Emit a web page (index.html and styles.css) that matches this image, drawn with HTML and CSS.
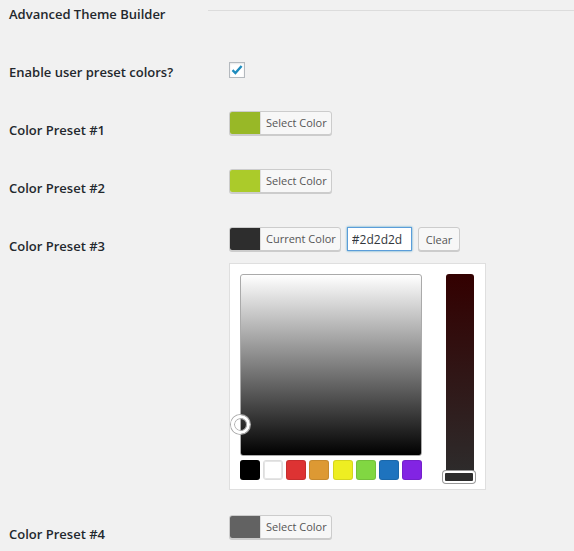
FILE: index.html
```
<!DOCTYPE html>
<html lang="en">
<head>
    <meta charset="UTF-8">
    <meta name="viewport" content="width=device-width, initial-scale=1.0">
    <title>Advanced Theme Builder</title>
    <link rel="stylesheet" href="styles.css">
</head>
<body>
    <div class="page">
        <div class="section-head">
            <h2>Advanced Theme Builder</h2>
            <div class="rule"></div>
        </div>

        <div class="row row-check">
            <label class="row-label">Enable user preset colors?</label>
            <div class="row-field">
                <span class="checkbox">
                    <svg width="14" height="14" viewBox="0 0 14 14"><path d="M2.5 7.2 L5.4 10 L11.6 3" fill="none" stroke="#1e8cbe" stroke-width="2.4"/></svg>
                </span>
            </div>
        </div>

        <div class="row">
            <label class="row-label">Color Preset #1</label>
            <div class="row-field">
                <button class="color-btn"><span class="swatch preset-1"></span><span class="btn-text">Select Color</span></button>
            </div>
        </div>

        <div class="row">
            <label class="row-label">Color Preset #2</label>
            <div class="row-field">
                <button class="color-btn"><span class="swatch preset-2"></span><span class="btn-text">Select Color</span></button>
            </div>
        </div>

        <div class="row row-open">
            <label class="row-label">Color Preset #3</label>
            <div class="row-field">
                <div class="controls">
                    <button class="color-btn"><span class="swatch preset-3"></span><span class="btn-text">Current Color</span></button>
                    <input type="text" class="hex-input" value="#2d2d2d">
                    <button class="plain-btn">Clear</button>
                </div>
                <div class="picker">
                    <div class="picker-main">
                        <div class="square">
                            <span class="handle"></span>
                        </div>
                        <div class="palette">
                            <span class="pal" style="background:#000"></span>
                            <span class="pal pal-white" style="background:#fff"></span>
                            <span class="pal" style="background:#dd3333"></span>
                            <span class="pal" style="background:#dd9933"></span>
                            <span class="pal" style="background:#eeee22"></span>
                            <span class="pal" style="background:#81d742"></span>
                            <span class="pal" style="background:#1e73be"></span>
                            <span class="pal" style="background:#8224e3"></span>
                        </div>
                    </div>
                    <div class="slider">
                        <span class="slider-handle"></span>
                    </div>
                </div>
            </div>
        </div>

        <div class="row">
            <label class="row-label">Color Preset #4</label>
            <div class="row-field">
                <button class="color-btn"><span class="swatch preset-4"></span><span class="btn-text">Select Color</span></button>
            </div>
        </div>
    </div>
</body>
</html>
```

FILE: styles.css
```
body {
    margin: 0;
    background: #f1f1f1;
    color: #23282d;
    font-family: "Open Sans", "Noto Sans", sans-serif;
    font-size: 13px;
}

.page {
    padding-left: 9px;
}

.section-head {
    display: flex;
    align-items: flex-start;
    height: 47px;
}

.section-head h2 {
    margin: 0;
    padding-top: 4px;
    width: 199px;
    font-size: 13px;
    font-weight: 600;
    line-height: 20px;
}

.rule {
    flex: 1;
    margin-top: 10px;
    height: 1px;
    background: #dcdcdc;
}

.row {
    display: flex;
    align-items: flex-start;
    height: 58px;
}

.row-label {
    width: 220px;
    padding-top: 24px;
    font-weight: 600;
    line-height: 20px;
}

.row-field {
    padding-top: 15px;
}

.row-check {
    height: 49px;
}

.row-check .row-label {
    padding-top: 15px;
}

.row-open {
    height: 288px;
}

.checkbox {
    display: flex;
    align-items: center;
    justify-content: center;
    width: 14px;
    height: 14px;
    border: 1px solid #b4b9be;
    background: #fff;
    box-shadow: inset 0 1px 2px rgba(0, 0, 0, 0.1);
}

.color-btn {
    display: flex;
    align-items: stretch;
    height: 24px;
    padding: 0;
    border: 1px solid #ccc;
    border-radius: 3px;
    background: #f7f7f7;
    box-shadow: 0 1px 0 #ccc;
    font-family: inherit;
    cursor: pointer;
    overflow: hidden;
}

.swatch {
    width: 30px;
    border-right: 1px solid #ddd;
}

.preset-1 { background: #98b827; }
.preset-2 { background: #abcb2a; }
.preset-3 { background: #2d2d2d; }
.preset-4 { background: #626262; }

.btn-text {
    padding: 0 4px 0 5px;
    font-size: 11px;
    line-height: 22px;
    color: #555;
}

.controls {
    display: flex;
    align-items: flex-start;
    gap: 6px;
}

.hex-input {
    box-sizing: border-box;
    width: 65px;
    height: 24px;
    margin: 0;
    padding: 0 4px;
    border: 1px solid #5b9dd9;
    box-shadow: 0 0 2px rgba(30, 140, 190, 0.8);
    font-family: inherit;
    font-size: 12px;
    color: #32373c;
    outline: none;
}

.plain-btn {
    height: 24px;
    padding: 0 7px;
    border: 1px solid #ccc;
    border-radius: 3px;
    background: #f7f7f7;
    box-shadow: 0 1px 0 #ccc;
    font-family: inherit;
    font-size: 11px;
    color: #555;
}

.picker {
    display: flex;
    gap: 24px;
    box-sizing: border-box;
    width: 257px;
    height: 227px;
    margin-top: 12px;
    padding: 10px;
    border: 1px solid #dfdfdf;
    background: #fff;
}

.square {
    position: relative;
    box-sizing: border-box;
    width: 182px;
    height: 182px;
    border: 1px solid #aaa;
    border-radius: 3px;
    background: linear-gradient(to bottom, #fff, #000);
}

.handle {
    position: absolute;
    left: -10px;
    top: 140px;
    width: 13px;
    height: 13px;
    border: 3px solid #fff;
    border-radius: 50%;
    box-shadow: 0 0 0 1px #aaa, inset 0 0 0 1px #aaa;
}

.palette {
    display: flex;
    justify-content: space-between;
    margin-top: 4px;
}

.pal {
    box-sizing: border-box;
    width: 20px;
    height: 20px;
    border-radius: 3px;
    box-shadow: inset 0 0 0 1px rgba(0, 0, 0, 0.1);
}

.pal-white {
    border: 1px solid #ddd;
}

.slider {
    position: relative;
    width: 28px;
    height: 207px;
    border-radius: 3px;
    background: linear-gradient(to bottom, #330000, #2d2d2d);
}

.slider-handle {
    position: absolute;
    left: -3px;
    bottom: -2px;
    box-sizing: border-box;
    width: 32px;
    height: 12px;
    border: 2px solid #fff;
    border-radius: 3px;
    background: #2d2d2d;
    box-shadow: 0 0 0 1px #999;
}
```
